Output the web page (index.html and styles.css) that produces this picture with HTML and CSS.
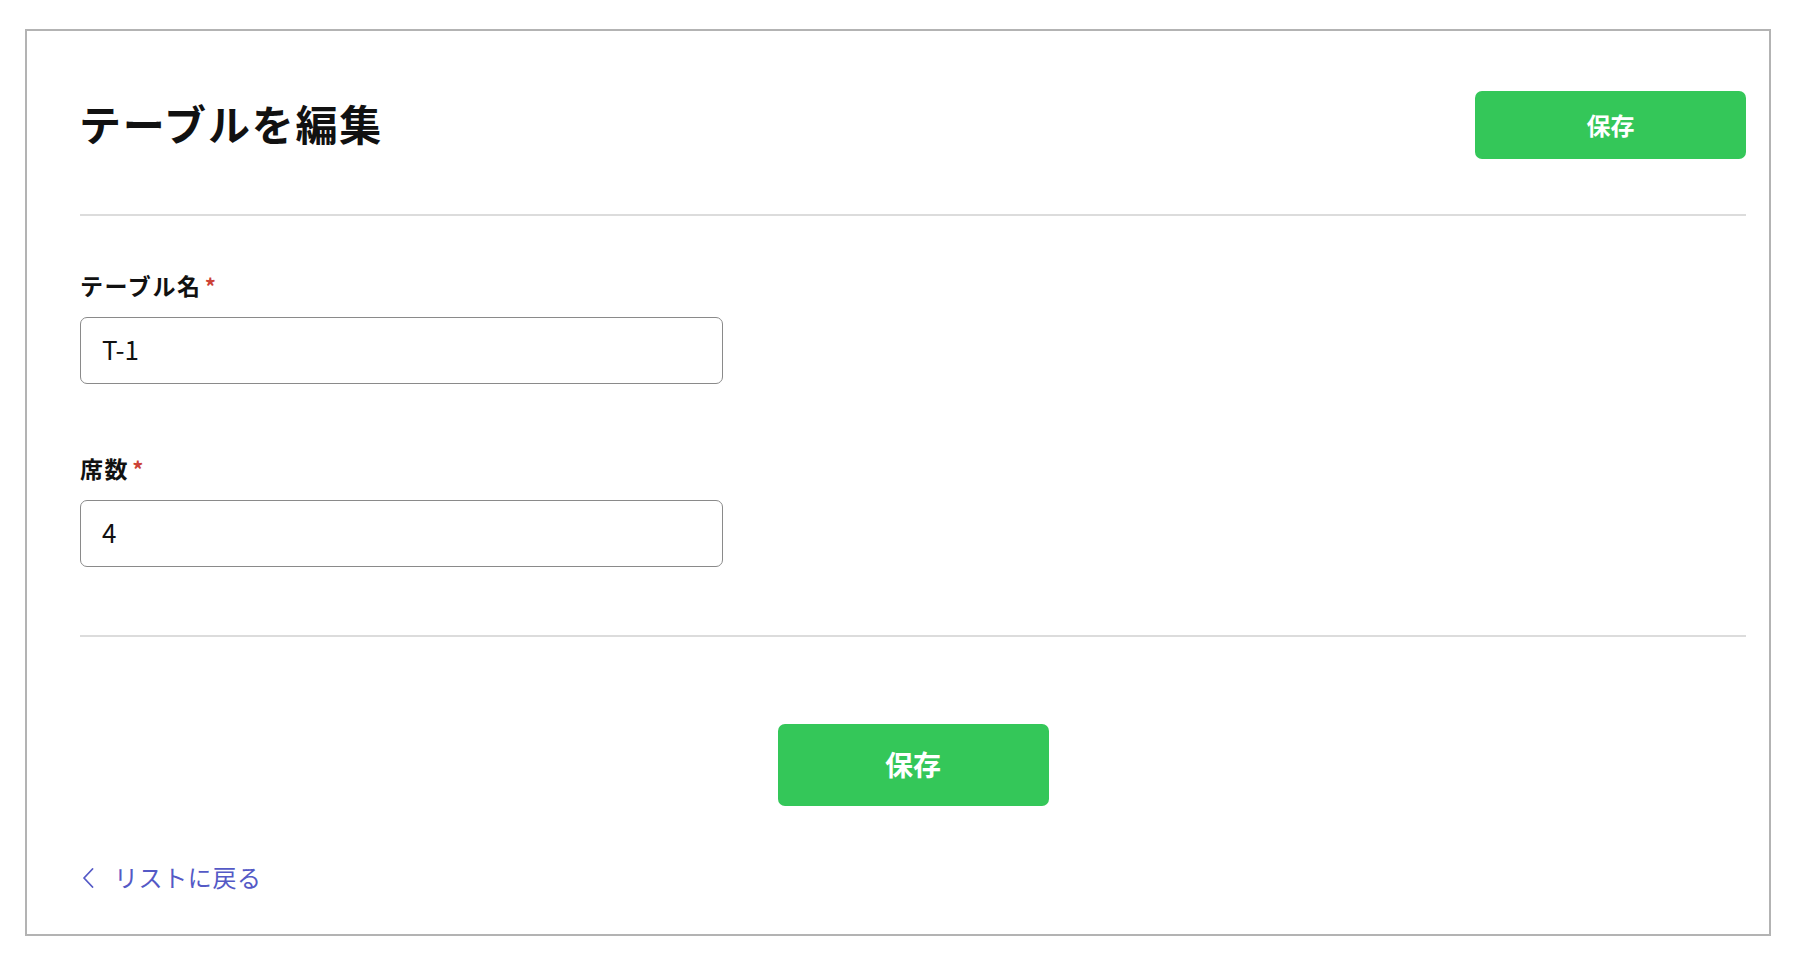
FILE: index.html
```html
<!DOCTYPE html>
<html lang="ja">
<head>
<meta charset="utf-8">
<title>テーブルを編集</title>
<link rel="stylesheet" href="styles.css">
</head>
<body>
<div class="page">
  <header class="page-header">
    <h1 class="title">テーブルを編集</h1>
    <button class="btn btn-top" type="button">保存</button>
  </header>
  <hr class="divider">
  <form class="form">
    <div class="field">
      <label class="label" for="name">テーブル名<span class="req">*</span></label>
      <input class="input" id="name" type="text" value="T-1">
    </div>
    <div class="field field-second">
      <label class="label" for="seats">席数<span class="req">*</span></label>
      <input class="input" id="seats" type="text" value="4">
    </div>
  </form>
  <hr class="divider divider-bottom">
  <div class="actions">
    <button class="btn btn-bottom" type="button">保存</button>
  </div>
  <a class="back" href="#">
    <svg class="chev" width="12" height="20" viewBox="0 0 12 20"><polyline points="10.5,1 2,10 10.5,19" fill="none" stroke="currentColor" stroke-width="1.8" stroke-linecap="round" stroke-linejoin="round"/></svg>
    <span class="back-text">リストに戻る</span>
  </a>
</div>
</body>
</html>
```

FILE: styles.css
```css
* { box-sizing: border-box; }
html, body { margin: 0; background: #fff; }
body {
  padding: 29px 23px 30px 25px;
  font-family: "Noto Sans CJK JP", "Noto Sans", sans-serif;
  color: #111;
}
.page {
  border: 2px solid #b3b3b3;
  padding: 60px 23px 36px 53px;
  height: 907px;
}
.page-header {
  display: flex;
  justify-content: space-between;
  align-items: center;
  height: 68px;
}
.title {
  margin: 0 0 0 -1px;
  padding-bottom: 4px;
  font-size: 42px;
  font-weight: 700;
  letter-spacing: 1.8px;
  line-height: 1;
  color: #111;
}
.btn {
  border: none;
  background: #34c759;
  color: #fff;
  font-family: "Noto Sans CJK JP", sans-serif;
  font-weight: 700;
  border-radius: 7px;
  cursor: pointer;
  padding: 0;
}
.btn-top {
  width: 271px;
  height: 68px;
  font-size: 24px;
  padding-bottom: 2px;
}
.divider {
  border: none;
  height: 2px;
  background: #dcdcdc;
  margin: 55px 0 0 0;
}
.form {
  padding-top: 53px;
}
.field { display: flex; flex-direction: column; align-items: flex-start; }
.field-second { margin-top: 68px; }
.label {
  font-size: 23px;
  font-weight: 700;
  line-height: 33px;
  letter-spacing: 1.6px;
  color: #111;
}
.req {
  color: #cc4236;
  font-size: 22px;
  margin-left: 3px;
}
.input {
  margin-top: 15px;
  width: 643px;
  height: 67px;
  border: 1.5px solid #8a8a8a;
  border-radius: 7px;
  padding: 0 21px 4px;
  font-family: "Noto Sans CJK JP", "Noto Sans", sans-serif;
  font-size: 26px;
  color: #111;
  background: #fff;
  outline: none;
}
.divider-bottom { margin-top: 68px; }
.actions {
  display: flex;
  justify-content: center;
  margin-top: 87px;
}
.btn-bottom {
  width: 271px;
  height: 82px;
  font-size: 28px;
  padding-bottom: 3px;
}
.back {
  display: inline-flex;
  align-items: center;
  gap: 20px;
  margin-top: 52px;
  height: 36px;
  color: #5459c6;
  text-decoration: none;
  font-size: 24px;
  letter-spacing: 0.6px;
  padding-left: 2px;
}
.chev { display: block; margin-top: 3px; }
```
